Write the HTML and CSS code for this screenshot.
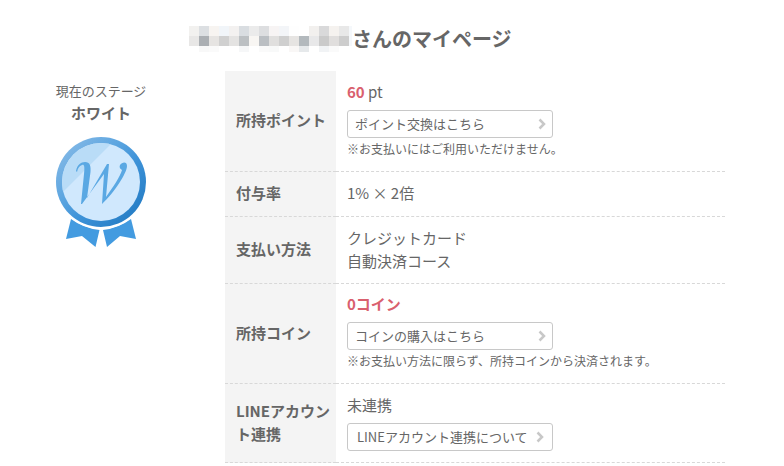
FILE: index.html
```html
<!DOCTYPE html>
<html lang="ja">
<head>
<meta charset="utf-8">
<title>マイページ</title>
<link rel="stylesheet" href="styles.css">
</head>
<body>
<main class="page">
  <h1 class="title">
    <svg class="mosaic" viewBox="0 0 163 26" width="163" height="26" shape-rendering="crispEdges" aria-hidden="true">
      <g>
        <path fill="#f2f1ef" d="M0 0h10v10H0z"/><path fill="#dcdfe2" d="M10 0h10v10H10z"/><path fill="#f7f4f1" d="M20 0h10v10H20z"/><path fill="#f1f5f9" d="M30 0h10v10H30z"/><path fill="#f3f1f0" d="M40 0h10v10H40z"/><path fill="#d9dde1" d="M50 0h10v10H50z"/><path fill="#ebebeb" d="M60 0h10v10H60z"/><path fill="#dddee0" d="M70 0h10v10H70z"/><path fill="#f7f4f4" d="M80 0h10v10H80z"/><path fill="#f3f5f8" d="M90 0h10v10H90z"/><path fill="#fefefe" d="M100 0h10v10h-10z"/><path fill="#f2f0ee" d="M120 0h10v10h-10z"/><path fill="#d9d9da" d="M130 0h10v10h-10z"/><path fill="#f5f2ef" d="M140 0h10v10h-10z"/><path fill="#e8e8e8" d="M150 0h10v10h-10z"/><path fill="#f5f8fb" d="M160 0h4v20h-4z"/>
      </g>
      <g>
        <path fill="#e8e7e6" d="M0 10h10v10H0z"/><path fill="#abafb3" d="M10 10h10v10H10z"/><path fill="#e6e4e2" d="M20 10h10v10H20z"/><path fill="#d0d0d0" d="M30 10h10v10H30z"/><path fill="#e4e3e2" d="M40 10h10v10H40z"/><path fill="#bcc0c3" d="M50 10h10v10H50z"/><path fill="#f8f6f3" d="M60 10h10v10H60z"/><path fill="#bbbfc3" d="M70 10h10v10H70z"/><path fill="#e0dfde" d="M80 10h10v10H80z"/><path fill="#cfcfcf" d="M90 10h10v10H90z"/><path fill="#e6e4e2" d="M100 10h10v10h-10z"/><path fill="#b3b9bd" d="M110 10h10v10h-10z"/><path fill="#e8e8e9" d="M120 10h10v10h-10z"/><path fill="#cacaca" d="M130 10h10v10h-10z"/><path fill="#e0dedd" d="M140 10h10v10h-10z"/><path fill="#cdcdcd" d="M150 10h10v10h-10z"/>
      </g>
      <g>
        <path fill="#f8f8f8" d="M10 20h10v6H10z"/><path fill="#fafafa" d="M20 20h10v6H20z"/><path fill="#f6f7f8" d="M50 20h10v6H50z"/><path fill="#fafafa" d="M70 20h10v6H70z"/><path fill="#f8f9f9" d="M80 20h10v6H80z"/><path fill="#f9f7f6" d="M100 20h10v6h-10z"/><path fill="#e6e9eb" d="M110 20h10v6h-10z"/><path fill="#f1f3f5" d="M130 20h10v6h-10z"/><path fill="#fafafa" d="M140 20h10v6h-10z"/>
      </g>
    </svg>
    <span>さんのマイページ</span>
  </h1>
  <div class="content">
    <section class="stage">
      <p class="stage-label">現在のステージ</p>
      <p class="stage-name">ホワイト</p>
      <svg class="medal" viewBox="0 0 90 110" width="90" height="110" aria-hidden="true">
        <defs>
          <linearGradient id="rim" x1="0.1" y1="0.1" x2="0.9" y2="0.9">
            <stop offset="0" stop-color="#82b8e6"/>
            <stop offset="0.35" stop-color="#5ca5e0"/>
            <stop offset="0.6" stop-color="#3d92d8"/>
            <stop offset="1" stop-color="#247cc4"/>
          </linearGradient>
          <clipPath id="face"><circle cx="45" cy="45" r="39"/></clipPath>
        </defs>
        <path fill="#439be0" d="M15 82Q27 91 43.500 93L39.500 110L26 99L10 102z"/>
        <path fill="#439be0" d="M75 82Q63 91 47 93L51 110L64 99L80 102z"/>
        <circle cx="45" cy="45" r="47" fill="#fff"/>
        <circle cx="45" cy="45" r="45" fill="url(#rim)"/>
        <circle cx="45" cy="45" r="39" fill="#d0e8fd"/>
        <path clip-path="url(#face)" fill="#b9dcf7" d="M0 0H62L0 62z"/>
        <path fill="#5aa8e3" d="M20 34C21 28 25 25 29 25C34 25 35 29 34.500 35L31 61L51 27L53 27L50 60C57 50 64 40 66 33C64 32 63 30 64 28C66 25 71 24 71 29C71 36 58 56 46 67L48 37L26 67L25 67L28 37C29 29 28 27 26 28C23 29 22 31 21 35z"/>
      </svg>
    </section>
    <table class="status">
      <tbody>
        <tr class="points">
          <th scope="row">所持ポイント</th>
          <td>
            <p><strong class="amount">60</strong> pt</p>
            <a class="link" href="#">ポイント交換はこちら<svg class="arrow" viewBox="0 0 8 12" width="8" height="12" aria-hidden="true"><path d="M1.500 1.500L6 6L1.500 10.500"/></svg></a>
            <p class="note">※お支払いにはご利用いただけません。</p>
          </td>
        </tr>
        <tr class="rate">
          <th scope="row">付与率</th>
          <td>1% × 2倍</td>
        </tr>
        <tr class="payment">
          <th scope="row">支払い方法</th>
          <td>クレジットカード<br>自動決済コース</td>
        </tr>
        <tr>
          <th scope="row">所持コイン</th>
          <td>
            <p><strong class="amount">0コイン</strong></p>
            <a class="link" href="#">コインの購入はこちら<svg class="arrow" viewBox="0 0 8 12" width="8" height="12" aria-hidden="true"><path d="M1.500 1.500L6 6L1.500 10.500"/></svg></a>
            <p class="note">※お支払い方法に限らず、所持コインから決済されます。</p>
          </td>
        </tr>
        <tr class="line">
          <th scope="row">LINEアカウント連携</th>
          <td>
            <p>未連携</p>
            <a class="link link-inset" href="#">LINEアカウント連携について<svg class="arrow" viewBox="0 0 8 12" width="8" height="12" aria-hidden="true"><path d="M1.500 1.500L6 6L1.500 10.500"/></svg></a>
          </td>
        </tr>
      </tbody>
    </table>
  </div>
</main>
</body>
</html>
```
FILE: styles.css
```css
* {
  box-sizing: border-box;
}

body {
  margin: 0;
  background: #fff;
  color: #666;
  font-family: "Noto Sans CJK JP", sans-serif;
  font-size: 15px;
  line-height: 23px;
}

p {
  margin: 0;
}

.page {
  padding: 24px 59px 0 25px;
}

.title {
  display: flex;
  align-items: center;
  margin: 0 0 17px;
  padding-left: 164px;
  font-size: 20px;
  line-height: 30px;
}

.mosaic {
  flex: none;
}

.content {
  display: grid;
  grid-template-columns: 152px 1fr;
  column-gap: 48px;
  align-items: start;
}

.stage {
  display: flex;
  flex-direction: column;
  align-items: center;
  padding-top: 9px;
}

.stage-label {
  font-size: 13px;
  line-height: 22px;
}

.stage-name {
  font-weight: 700;
  line-height: 22px;
}

.medal {
  margin-top: 13px;
}

.status {
  width: 100%;
  table-layout: fixed;
  border-spacing: 0;
}

.status th,
.status td {
  padding: 8px 0 11px 11px;
  border-bottom: 1px dashed #d8d8d8;
  text-align: left;
  vertical-align: middle;
}

.status th {
  width: 111px;
  padding-right: 5px;
  background: #f4f4f4;
  font-weight: 700;
}

.points th,
.points td {
  height: 101px;
}

.rate th,
.rate td {
  height: 45px;
}

.payment th,
.payment td {
  height: 67px;
}

.line th,
.line td {
  height: 79px;
}

.amount {
  color: #d9606e;
  font-weight: 700;
}

.link {
  display: flex;
  align-items: center;
  justify-content: space-between;
  width: 206px;
  height: 28px;
  margin-top: 7px;
  padding: 0 6px 0 7px;
  border: 1px solid #c8c8c8;
  border-radius: 3px;
  color: #666;
  font-size: 13px;
  line-height: 20px;
  text-decoration: none;
}

.link-inset {
  padding: 0 8px 0 9px;
}

.arrow {
  flex: none;
  fill: none;
  stroke: #c8c8c8;
  stroke-width: 2.5;
}

.note {
  font-size: 12px;
  line-height: 22px;
}
```
